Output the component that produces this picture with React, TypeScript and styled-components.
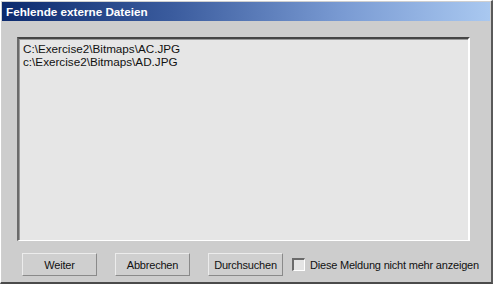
import React, { useState } from 'react';
import styled, { createGlobalStyle } from 'styled-components';

const GlobalStyle = createGlobalStyle`
  html, body {
    margin: 0;
    padding: 0;
    background: #d4d4d4;
  }
`;

const files = ['C:\\Exercise2\\Bitmaps\\AC.JPG', 'c:\\Exercise2\\Bitmaps\\AD.JPG'];

const MissingFilesDialog = () => {
  const [hideNext, setHideNext] = useState(false);

  return (
    <Window>
      <TitleBar>Fehlende externe Dateien</TitleBar>
      <Body>
        <FileList>
          {files.map((file) => (
            <FileRow key={file}>{file}</FileRow>
          ))}
        </FileList>
        <Footer>
          <Button>Weiter</Button>
          <Button>Abbrechen</Button>
          <Button>Durchsuchen</Button>
          <CheckLabel>
            <CheckBox checked={hideNext} onClick={() => setHideNext(!hideNext)} />
            Diese Meldung nicht mehr anzeigen
          </CheckLabel>
        </Footer>
      </Body>
    </Window>
  );
};

const Window = styled.div`
  box-sizing: border-box;
  width: 493px;
  height: 284px;
  display: flex;
  flex-direction: column;
  background: #cfcfcf;
  border-top: 1px solid #ffffff;
  border-left: 1px solid #ffffff;
  border-right: 2px solid #5a5a5a;
  border-bottom: 2px solid #4a4a4a;
  padding: 1px 1px 0 1px;
  font-family: 'Liberation Sans', Arial, sans-serif;
`;

const TitleBar = styled.div`
  height: 19px;
  flex-shrink: 0;
  padding-left: 4px;
  display: flex;
  align-items: center;
  background: linear-gradient(90deg, #0c2a6e 0%, #3b5c9e 35%, #7a9bd3 70%, #a9c8f0 100%);
  color: #ffffff;
  font-weight: bold;
  font-size: 11.7px;
`;

const Body = styled.div`
  flex: 1;
  display: flex;
  flex-direction: column;
  padding: 16px 20px 0 15px;
  background: #cdcdcd;
`;

const FileList = styled.div`
  box-sizing: border-box;
  height: 204px;
  padding: 3px 4px;
  background: #e6e6e6;
  border-top: 2px solid #454545;
  border-left: 2px solid #6a6a6a;
  border-right: 2px solid #ffffff;
  border-bottom: 1px solid #ffffff;
  box-shadow: inset 1px 1px 0 #9a9a9a;
`;

const FileRow = styled.div`
  font-size: 11.7px;
  line-height: 13px;
  color: #111111;
`;

const Footer = styled.div`
  display: flex;
  align-items: center;
  gap: 18px;
  margin-top: 12px;
  padding-left: 5px;
`;

const Button = styled.button`
  box-sizing: border-box;
  flex-shrink: 0;
  width: 75px;
  height: 23px;
  padding: 0;
  background: #cfcfcf;
  border: 1px solid;
  border-color: #ececec #8a8a8a #8a8a8a #ececec;
  font-family: 'Liberation Sans', Arial, sans-serif;
  font-size: 11px;
  letter-spacing: -0.2px;
  color: #111111;
`;

const CheckLabel = styled.label`
  display: flex;
  align-items: center;
  gap: 5px;
  margin-left: -9px;
  white-space: nowrap;
  font-size: 11px;
  letter-spacing: -0.2px;
  color: #111111;
`;

const CheckBox = styled.span<{ checked: boolean }>`
  box-sizing: border-box;
  flex-shrink: 0;
  width: 13px;
  height: 13px;
  background: #e4e4e4;
  border-top: 2px solid #6a6a6a;
  border-left: 2px solid #6a6a6a;
  border-right: 1px solid #ffffff;
  border-bottom: 1px solid #ffffff;
  position: relative;
  &::after {
    content: '${({ checked }) => (checked ? '✓' : '')}';
    position: absolute;
    left: 0;
    top: -3px;
    font-size: 11px;
  }
`;

const App = () => (
  <>
    <GlobalStyle />
    <MissingFilesDialog />
  </>
);

export default App;
